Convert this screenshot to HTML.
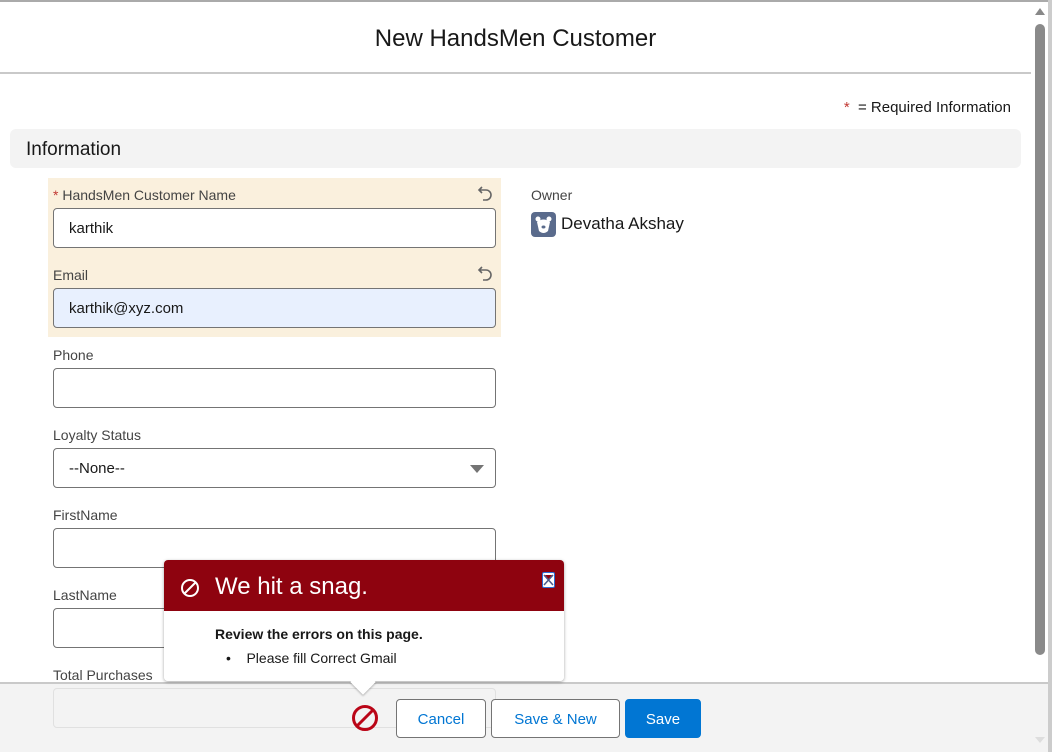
<!DOCTYPE html>
<html><head><meta charset="utf-8"><style>
*{box-sizing:border-box;margin:0;padding:0}
body{width:1052px;height:752px;overflow:hidden;background:#fff;font-family:"Segoe UI","Liberation Sans",sans-serif;color:#181818;position:relative}
.a{position:absolute}
.lbl{font-size:14px;color:#444}
.inp{position:absolute;left:53px;width:443px;height:40px;border:1px solid #747474;border-radius:4px;background:#fff;font-size:15px;padding:0 15px;line-height:40px}
.btn{position:absolute;top:699px;height:39px;border:1px solid #747474;border-radius:4px;background:#fff;color:#0176d3;font-size:15px;text-align:center;line-height:40px}
.undo{position:absolute;left:477px;width:16px;height:16px}
</style></head><body>
<div class="a" style="left:0;top:0;width:1052px;height:2px;background:#aaa"></div>
<div class="a" style="left:1048px;top:0;width:4px;height:752px;background:#ccc"></div>
<div class="a" style="left:0;top:25px;width:1031px;text-align:center;font-size:24px;color:#181818">New HandsMen Customer</div>
<div class="a" style="left:0;top:72px;width:1031px;height:2px;background:#c9c9c9"></div>
<div class="a" style="right:41px;top:99px;font-size:15px"><span style="color:#c23934">*</span>&nbsp; = Required Information</div>
<div class="a" style="left:10px;top:129px;width:1011px;height:39px;background:#f3f3f3;border-radius:6px"></div>
<div class="a" style="left:26px;top:139px;font-size:19px">Information</div>

<div class="a" style="left:48px;top:178px;width:453px;height:159px;background:#faf0dd"></div>
<div class="a lbl" style="left:53px;top:187px"><span style="color:#c23934">*</span> HandsMen Customer Name</div>
<svg class="undo" style="top:185px" viewBox="0 0 16 16"><path d="M5 2L2 5l3 3M2 5h7a5 5 0 0 1 0 10H6" fill="none" stroke="#666" stroke-width="1.6"/></svg>
<div class="inp" style="top:208px">karthik</div>
<div class="a lbl" style="left:53px;top:267px">Email</div>
<svg class="undo" style="top:265px" viewBox="0 0 16 16"><path d="M5 2L2 5l3 3M2 5h7a5 5 0 0 1 0 10H6" fill="none" stroke="#666" stroke-width="1.6"/></svg>
<div class="inp" style="top:288px;background:#e8f0fe">karthik@xyz.com</div>

<div class="a lbl" style="left:53px;top:347px">Phone</div>
<div class="inp" style="top:368px"></div>
<div class="a lbl" style="left:53px;top:427px">Loyalty Status</div>
<div class="inp" style="top:448px">--None--</div>
<div class="a" style="left:470px;top:465px;width:0;height:0;border-left:7px solid transparent;border-right:7px solid transparent;border-top:8px solid #747474"></div>
<div class="a lbl" style="left:53px;top:507px">FirstName</div>
<div class="inp" style="top:528px"></div>
<div class="a lbl" style="left:53px;top:587px">LastName</div>
<div class="inp" style="top:608px"></div>
<div class="a lbl" style="left:53px;top:667px">Total Purchases</div>

<div class="a lbl" style="left:531px;top:187px">Owner</div>
<div class="a" style="left:531px;top:212px;width:25px;height:25px;background:#5a6b8c;border-radius:4px">
<svg width="25" height="25" viewBox="0 0 25 25"><circle cx="7" cy="7" r="2.5" fill="#fff"/><circle cx="18" cy="7" r="2.5" fill="#fff"/><path d="M6 10 Q12.5 5 19 10 L17 19 Q12.5 23 8 19Z" fill="#fff"/><ellipse cx="12.5" cy="15" rx="2" ry="1.5" fill="#5a6b8c"/></svg></div>
<div class="a" style="left:561px;top:214px;font-size:17px">Devatha Akshay</div>

<div class="a" style="left:1035px;top:8px;width:0;height:0;border-left:5px solid transparent;border-right:5px solid transparent;border-bottom:7px solid #888"></div>
<div class="a" style="left:1035px;top:24px;width:10px;height:631px;background:#8a8a8a;border-radius:5px"></div>

<div class="a" style="left:0;top:682px;width:1048px;height:70px;background:#f3f3f3;border-top:2px solid #c9c9c9"></div>
<div class="a" style="left:53px;top:688px;width:443px;height:40px;border:1px solid #e0e0e0;border-radius:4px"></div>
<div class="a" style="left:1035px;top:737px;width:0;height:0;border-left:5px solid transparent;border-right:5px solid transparent;border-top:6px solid #ddd"></div>
<svg class="a" style="left:350px;top:703px" width="30" height="30" viewBox="0 0 30 30"><circle cx="15" cy="15" r="11.5" fill="none" stroke="#ba0517" stroke-width="3"/><line x1="7" y1="23" x2="23" y2="7" stroke="#ba0517" stroke-width="3"/></svg>
<div class="btn" style="left:396px;width:90px">Cancel</div>
<div class="btn" style="left:491px;width:129px">Save &amp; New</div>
<div class="btn" style="left:625px;width:76px;background:#0176d3;border-color:#0176d3;color:#fff">Save</div>

<div class="a" style="left:164px;top:560px;width:400px;height:121px;background:#fff;border-radius:4px;box-shadow:0 1px 3px rgba(0,0,0,.35)"></div>
<div class="a" style="left:354px;top:673px;width:18px;height:18px;background:#fff;transform:rotate(45deg);box-shadow:1px 1px 2px rgba(0,0,0,.25)"></div>
<div class="a" style="left:164px;top:560px;width:400px;height:121px;border-radius:4px;overflow:hidden;background:#fff">
<div style="height:51px;background:#8e030f;color:#fff;font-size:24px;padding-left:51px;line-height:54px">We hit a snag.</div>
<svg style="position:absolute;left:16px;top:18px" width="20" height="20" viewBox="0 0 20 20"><circle cx="10" cy="10" r="8" fill="none" stroke="#fff" stroke-width="2"/><line x1="4.5" y1="15.5" x2="15.5" y2="4.5" stroke="#fff" stroke-width="2"/></svg>
<div style="position:absolute;left:378px;top:12px;width:13px;height:16px;background:#fff;border-radius:2px;border:1px solid #2b6fd6"><svg width="11" height="14" viewBox="0 0 11 14"><path d="M1 2L10 12M10 2L1 12" stroke="#4a5a8a" stroke-width="1.5"/><path d="M2 2h7l-3.5 4z" fill="#8e030f"/></svg></div>
<div style="position:absolute;left:51px;top:66px;font-size:14px;font-weight:bold">Review the errors on this page.</div>
<div style="position:absolute;left:62px;top:90px;font-size:14px">•&nbsp;&nbsp;&nbsp;&nbsp;Please fill Correct Gmail</div>
</div>
</body></html>
